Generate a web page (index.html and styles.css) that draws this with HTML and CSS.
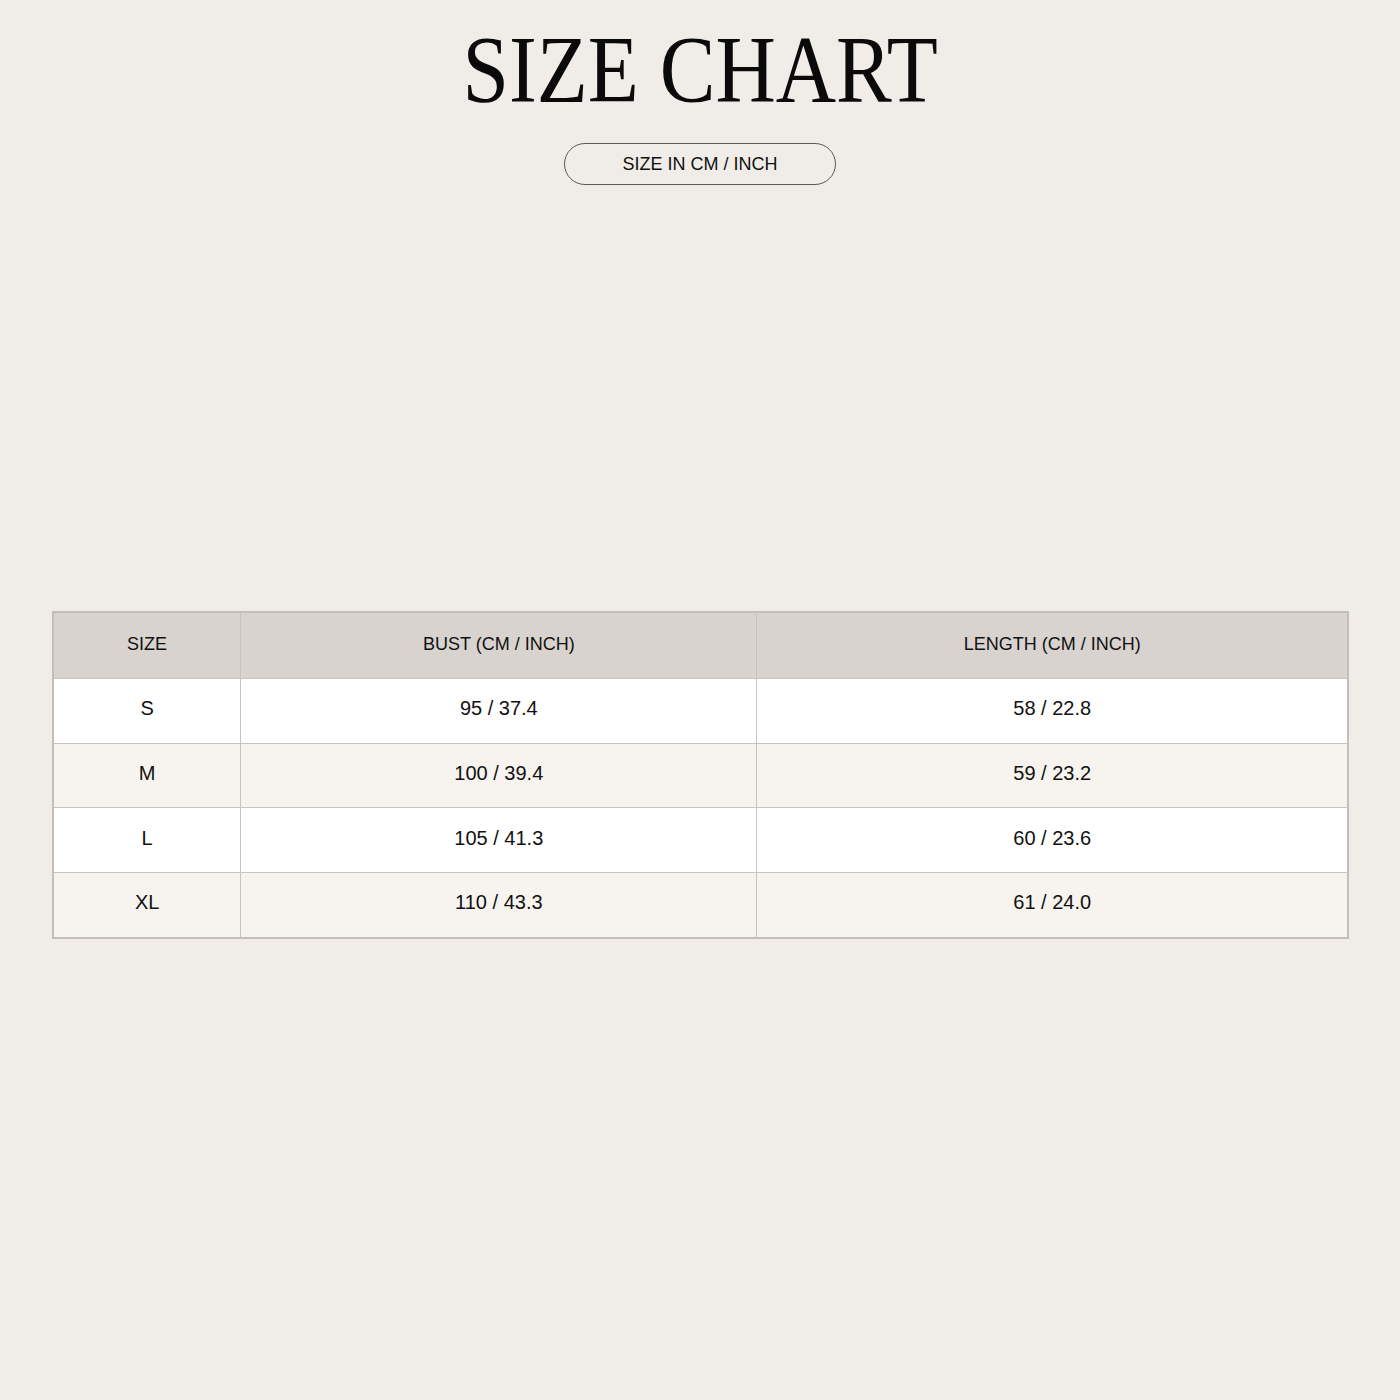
FILE: index.html
```html
<!DOCTYPE html>
<html>
<head>
<meta charset="utf-8">
<link rel="stylesheet" href="styles.css">
</head>
<body>
<header class="head">
  <h1 class="title">SIZE CHART</h1>
  <div class="pill">SIZE IN CM / INCH</div>
</header>
<table class="chart">
  <colgroup>
    <col class="c1"><col class="c2"><col class="c3">
  </colgroup>
  <thead>
    <tr><th>SIZE</th><th>BUST (CM / INCH)</th><th>LENGTH (CM / INCH)</th></tr>
  </thead>
  <tbody>
    <tr><td>S</td><td>95 / 37.4</td><td>58 / 22.8</td></tr>
    <tr><td>M</td><td>100 / 39.4</td><td>59 / 23.2</td></tr>
    <tr><td>L</td><td>105 / 41.3</td><td>60 / 23.6</td></tr>
    <tr><td>XL</td><td>110 / 43.3</td><td>61 / 24.0</td></tr>
  </tbody>
</table>
</body>
</html>
```
FILE: styles.css
```css
html, body {
  margin: 0;
  padding: 0;
  background: #f0ede8;
}
body {
  font-family: "Liberation Sans", Arial, sans-serif;
  color: #111;
  width: 1400px;
  height: 1400px;
}
.head {
  display: flex;
  flex-direction: column;
  align-items: center;
  padding-top: 22px;
}
.title {
  margin: 0;
  font-family: "Liberation Serif", "Times New Roman", serif;
  font-weight: 400;
  font-size: 96px;
  line-height: 96px;
  letter-spacing: 0;
  transform: scaleX(0.87);
  color: #0a0a0a;
}
.pill {
  margin-top: 25px;
  width: 270px;
  height: 40px;
  box-sizing: content-box;
  border: 1px solid #5a5a5a;
  border-radius: 22px;
  display: flex;
  align-items: center;
  justify-content: center;
  font-size: 18px;
  color: #111;
}
.chart {
  margin: 426px 0 0 52px;
  width: 1297px;
  border-collapse: collapse;
  border: 2px solid #c3beb9;
  font-size: 20px;
}
.c1 { width: 188px; }
.c2 { width: 517px; }
.c3 { width: 592px; }
.chart th, .chart td {
  border: 1px solid #c8c3be;
  text-align: center;
  padding: 0 0 4px 0;
  height: 59.7px;
  font-weight: 400;
  color: #111;
}
.chart th {
  background: #d8d3cf;
  height: 63px;
  padding: 0 0 2px 0;
  font-size: 18px;
}
.chart tbody tr:nth-child(odd) td { background: #ffffff; }
.chart tbody tr:nth-child(even) td { background: #f7f4ef; }
```
